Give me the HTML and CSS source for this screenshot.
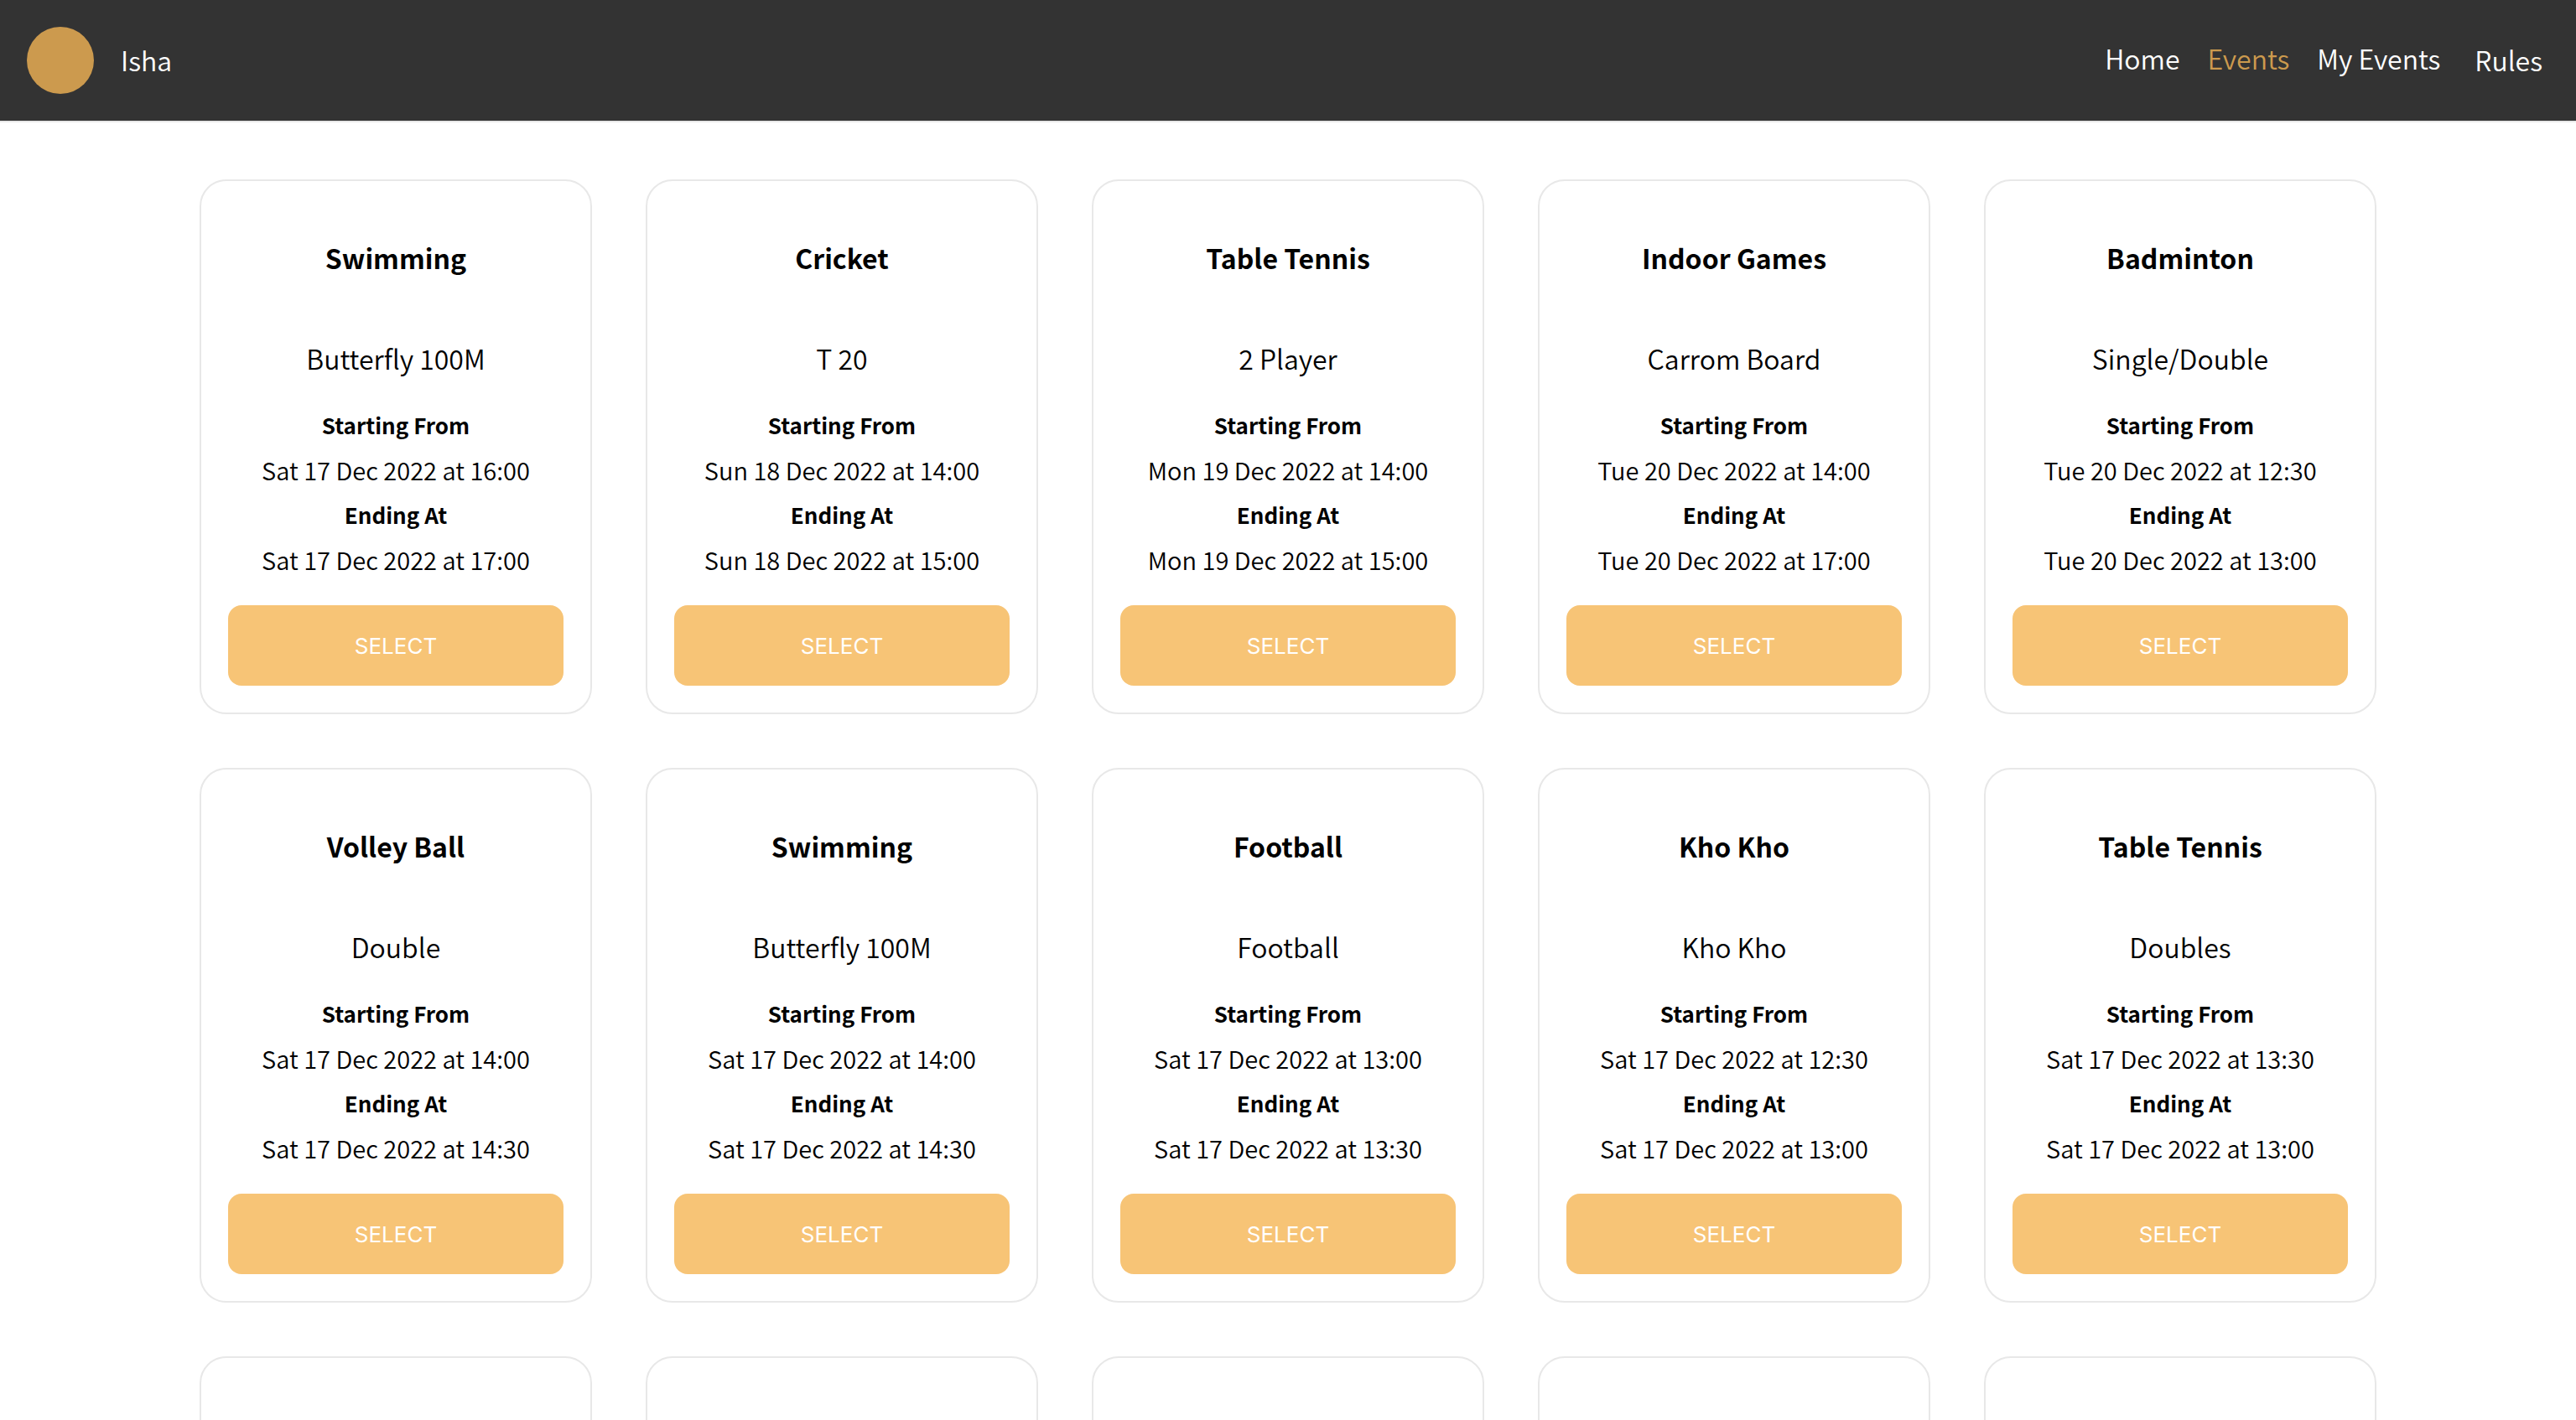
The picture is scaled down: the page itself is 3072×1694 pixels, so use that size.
FILE: index.html
```html
<!DOCTYPE html>
<html lang="en">
<head>
<meta charset="utf-8">
<meta name="viewport" content="width=device-width, initial-scale=1">
<title>Events</title>
<link rel="stylesheet" href="styles.css">
</head>
<body>
<header class="topbar">
  <div class="profile"><span class="avatar"></span><span class="name">Isha</span></div>
  <nav class="nav">
    <a href="#home">Home</a>
    <a href="#events" class="active" aria-current="page">Events</a>
    <a href="#my-events">My Events</a>
    <button type="button" class="rules">Rules</button>
  </nav>
</header>
<main class="events" id="events"></main>
<script src="events.js"></script>
</body>
</html>
```
FILE: styles.css
```css
* { box-sizing: border-box; }

body {
  margin: 0;
  height: 100vh;
  display: flex;
  flex-direction: column;
  overflow: hidden;
  background: #fff;
  color: #000;
  font-family: "Noto Sans CJK JP", "Noto Sans", sans-serif;
  font-weight: 350;
  font-size: 32px;
}

.topbar {
  flex: none;
  display: flex;
  justify-content: space-between;
  align-items: center;
  padding: 32px;
  background: #333;
  border-bottom: 2px solid #e8e8e8;
  color: #fff;
}

.profile, .nav {
  display: flex;
  align-items: center;
}

.profile { gap: 32px; }
.nav { gap: 33px; line-height: 44px; padding-bottom: 6px; }
.name { line-height: 48px; padding-bottom: 2px; }

.avatar {
  width: 80px;
  height: 80px;
  border-radius: 50%;
  background: #cc9a4e;
}

.nav a { color: inherit; text-decoration: none; }
.nav .active { color: #cc9a4e; }

.rules {
  border: 0;
  padding: 4px 8px 0;
  background: none;
  color: inherit;
  font: inherit;
  cursor: pointer;
}

.events {
  flex: 1;
  min-height: 0;
  overflow: hidden;
  display: grid;
  grid-template-columns: repeat(auto-fill, 468px);
  grid-auto-rows: max-content;
  justify-content: center;
  gap: 64px;
  padding: 68px 32px;
}

.card {
  min-height: 638px;
  padding: 32px;
  border: 2px solid #e8e8e8;
  border-radius: 32px;
  text-align: center;
}

.card h2 {
  margin: 35px 0 72px;
  font-size: 32px;
  font-weight: 700;
  line-height: 48px;
}

.card p { margin: 0 0 29px; line-height: 48px; }

.card dl { margin: 0 0 28px; }

.card dt {
  font-size: 26px;
  font-weight: 700;
  line-height: 54px;
}

.card dd {
  margin: 0;
  font-size: 29px;
  line-height: 53px;
}

.select {
  display: block;
  width: 100%;
  height: 96px;
  border: 0;
  border-radius: 16px;
  background: #f7c476;
  color: #fff;
  font-family: Inter, "Liberation Sans", sans-serif;
  font-size: 26px;
  cursor: pointer;
}
```
FILE: events.js
```js
const events = [
  ["Swimming", "Butterfly 100M", "Sat 17 Dec 2022 at 16:00", "Sat 17 Dec 2022 at 17:00"],
  ["Cricket", "T 20", "Sun 18 Dec 2022 at 14:00", "Sun 18 Dec 2022 at 15:00"],
  ["Table Tennis", "2 Player", "Mon 19 Dec 2022 at 14:00", "Mon 19 Dec 2022 at 15:00"],
  ["Indoor Games", "Carrom Board", "Tue 20 Dec 2022 at 14:00", "Tue 20 Dec 2022 at 17:00"],
  ["Badminton", "Single/Double", "Tue 20 Dec 2022 at 12:30", "Tue 20 Dec 2022 at 13:00"],
  ["Volley Ball", "Double", "Sat 17 Dec 2022 at 14:00", "Sat 17 Dec 2022 at 14:30"],
  ["Swimming", "Butterfly 100M", "Sat 17 Dec 2022 at 14:00", "Sat 17 Dec 2022 at 14:30"],
  ["Football", "Football", "Sat 17 Dec 2022 at 13:00", "Sat 17 Dec 2022 at 13:30"],
  ["Kho Kho", "Kho Kho", "Sat 17 Dec 2022 at 12:30", "Sat 17 Dec 2022 at 13:00"],
  ["Table Tennis", "Doubles", "Sat 17 Dec 2022 at 13:30", "Sat 17 Dec 2022 at 13:00"],
  null, null, null, null, null
];

document.getElementById("events").innerHTML = events.map(e => e ? `
  <article class="card">
    <h2>${e[0]}</h2>
    <p>${e[1]}</p>
    <dl>
      <dt>Starting From</dt><dd>${e[2]}</dd>
      <dt>Ending At</dt><dd>${e[3]}</dd>
    </dl>
    <button type="button" class="select">SELECT</button>
  </article>` : `<article class="card"></article>`).join("");
```
